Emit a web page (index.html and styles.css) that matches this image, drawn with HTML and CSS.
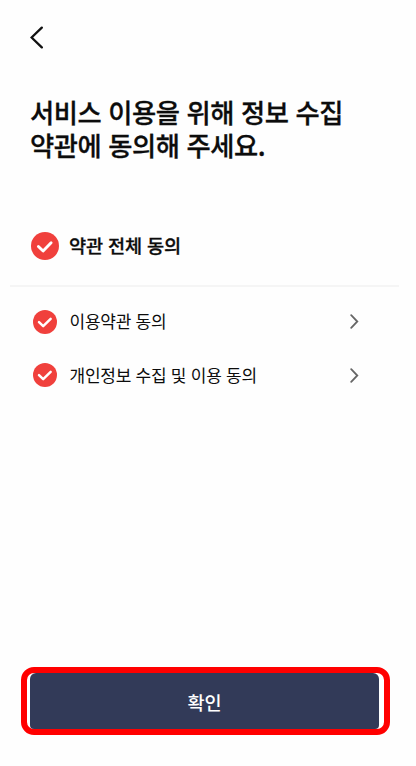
FILE: index.html
```html
<!DOCTYPE html>
<html lang="ko">
  <head>
    <meta charset="UTF-8">
    <meta name="viewport" content="width=device-width, initial-scale=1.0">
    <title>약관 동의</title>
    <link rel="stylesheet" href="styles.css">
  </head>

  <body>
    <header class="header">
      <button class="btn-back" aria-label="뒤로">
        <svg width="14" height="23" viewBox="0 0 14 23">
          <path d="M11.8 1.6L1.6 11.5l10.2 9.9"/>
        </svg>
      </button>
    </header>

    <main class="content">
      <h1 class="title">서비스 이용을 위해 정보 수집<br>약관에 동의해 주세요.</h1>

      <div class="agree-all">
        <svg class="check" viewBox="0 0 28 28">
          <circle cx="14" cy="14" r="14"/>
          <path d="M7.4 14.5l4.7 4.5 8-8.2"/>
        </svg>
        <span>약관 전체 동의</span>
      </div>

      <ul class="terms">
        <li class="term">
          <svg class="check" viewBox="0 0 28 28">
            <circle cx="14" cy="14" r="14"/>
            <path d="M7 14.2l4.9 4.7 8.7-8.5"/>
          </svg>
          <span>이용약관 동의</span>
          <svg class="arrow" width="9" height="15" viewBox="0 0 9 15">
            <path d="M1.2 1.2l6.1 6.3-6.1 6.3"/>
          </svg>
        </li>
        <li class="term">
          <svg class="check" viewBox="0 0 28 28">
            <circle cx="14" cy="14" r="14"/>
            <path d="M7 14.2l4.9 4.7 8.7-8.5"/>
          </svg>
          <span>개인정보 수집 및 이용 동의</span>
          <svg class="arrow" width="9" height="15" viewBox="0 0 9 15">
            <path d="M1.2 1.2l6.1 6.3-6.1 6.3"/>
          </svg>
        </li>
      </ul>
    </main>

    <footer class="footer">
      <div class="highlight">
        <button class="btn-confirm">확인</button>
      </div>
    </footer>
  </body>
</html>
```
FILE: styles.css
```css
* {
  box-sizing: border-box;
}
body {
  display: flex;
  flex-direction: column;
  height: 766px;
  margin: 0;
  background-color: #fefefe;
  color: #0c0c0c;
  font-family: "Noto Sans CJK KR", "Noto Sans", sans-serif;
}
button {
  padding: 0;
  border: none;
  font-family: inherit;
  cursor: pointer;
}
.header {
  height: 95px;
  padding: 26px 30px 0;
}
.btn-back {
  display: block;
  background: none;
}
.btn-back svg {
  display: block;
  fill: none;
  stroke: #111;
  stroke-width: 2.3;
  stroke-linecap: round;
}
.content {
  flex: 1;
}
.title {
  height: 110px;
  margin: 0;
  padding-left: 30px;
  font-size: 26.3px;
  font-weight: 500;
  line-height: 33px;
  letter-spacing: -0.42px;
  white-space: nowrap;
  -webkit-text-stroke: 0.3px #0c0c0c;
}
.check {
  width: 24px;
  height: 24px;
  fill: #f0403c;
}
.check path {
  fill: none;
  stroke: #fff;
  stroke-width: 2.9;
  stroke-linecap: round;
  stroke-linejoin: round;
}
.agree-all {
  display: flex;
  align-items: center;
  gap: 10px;
  height: 82px;
  margin: 0 17px 0 10px;
  padding: 1px 0 0 21px;
  border-bottom: 2px solid #f5f5f5;
  font-size: 18.6px;
  font-weight: 500;
  letter-spacing: -0.15px;
  -webkit-text-stroke: 0.3px #0c0c0c;
}
.agree-all span {
  padding-bottom: 2px;
}
.agree-all .check {
  width: 28px;
  height: 28px;
}
.terms {
  margin: 0;
  padding: 8px 57px 0 33px;
  list-style: none;
}
.term {
  display: flex;
  align-items: center;
  gap: 12.5px;
  height: 53.5px;
  font-size: 17px;
  letter-spacing: -0.25px;
}
.term span {
  padding-bottom: 2px;
}
.arrow {
  margin-left: auto;
  fill: none;
  stroke: #666;
  stroke-width: 1.8;
  stroke-linecap: round;
}
.footer {
  padding: 0 26px 31px 21px;
}
.highlight {
  height: 68px;
  padding: 0 5px 0 3px;
  border: 6px solid #f00;
  border-radius: 13px;
  background-color: #fff;
}
.btn-confirm {
  display: block;
  width: 100%;
  height: 56px;
  border-radius: 6px 6px 4px 4px;
  background-color: #323a58;
  color: #fff;
  font-size: 18.6px;
  font-weight: 500;
}
```
